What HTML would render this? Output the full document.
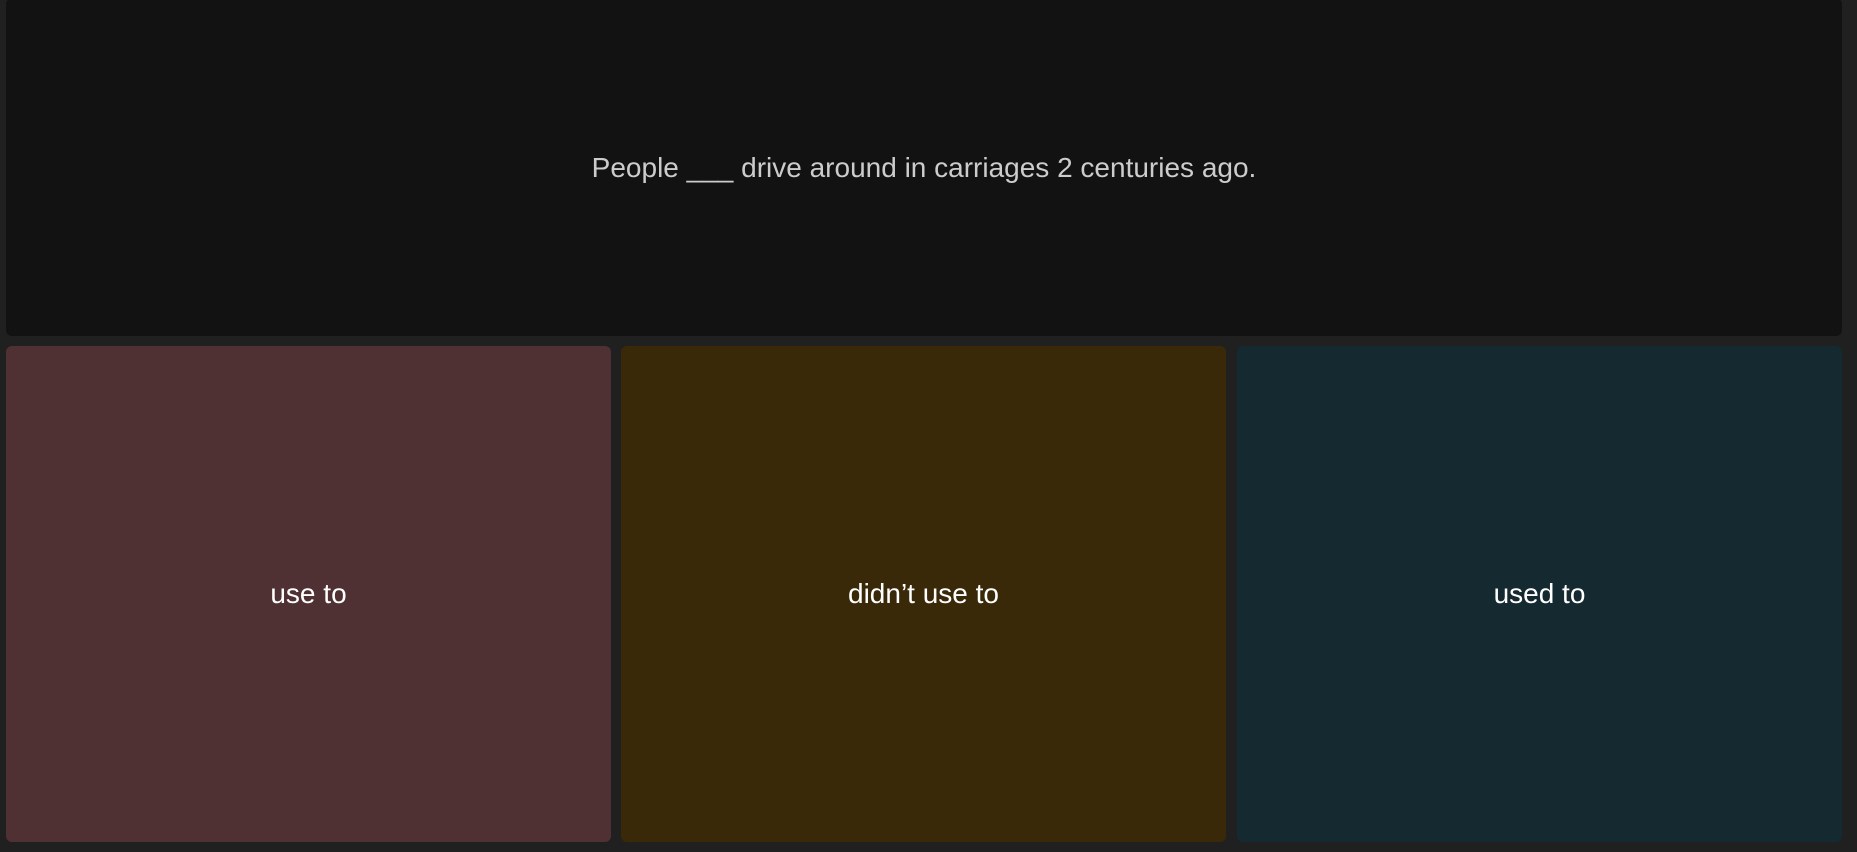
<!DOCTYPE html>
<html><head><meta charset="utf-8"><style>
html,body{margin:0;padding:0;width:1857px;height:852px;overflow:hidden;background:#202020;font-family:"Liberation Sans",Arial,sans-serif}
.b{position:absolute;display:flex;align-items:center;justify-content:center;border-radius:6px;box-sizing:border-box}
.q{left:6px;top:-2px;width:1836px;height:338px;background:#121212;color:#cccccc;font-size:28px;padding-top:2px}
.a{top:346px;height:496px;width:605px;color:#fff;font-size:28px;padding-bottom:1px}
</style></head><body>
<div class="b q">People ___ drive around in carriages 2 centuries ago.</div>
<div class="b a" style="left:6px;background:#503133">use to</div>
<div class="b a" style="left:621px;background:#3a2909">didn’t use to</div>
<div class="b a" style="left:1237px;background:#142930">used to</div>
</body></html>
